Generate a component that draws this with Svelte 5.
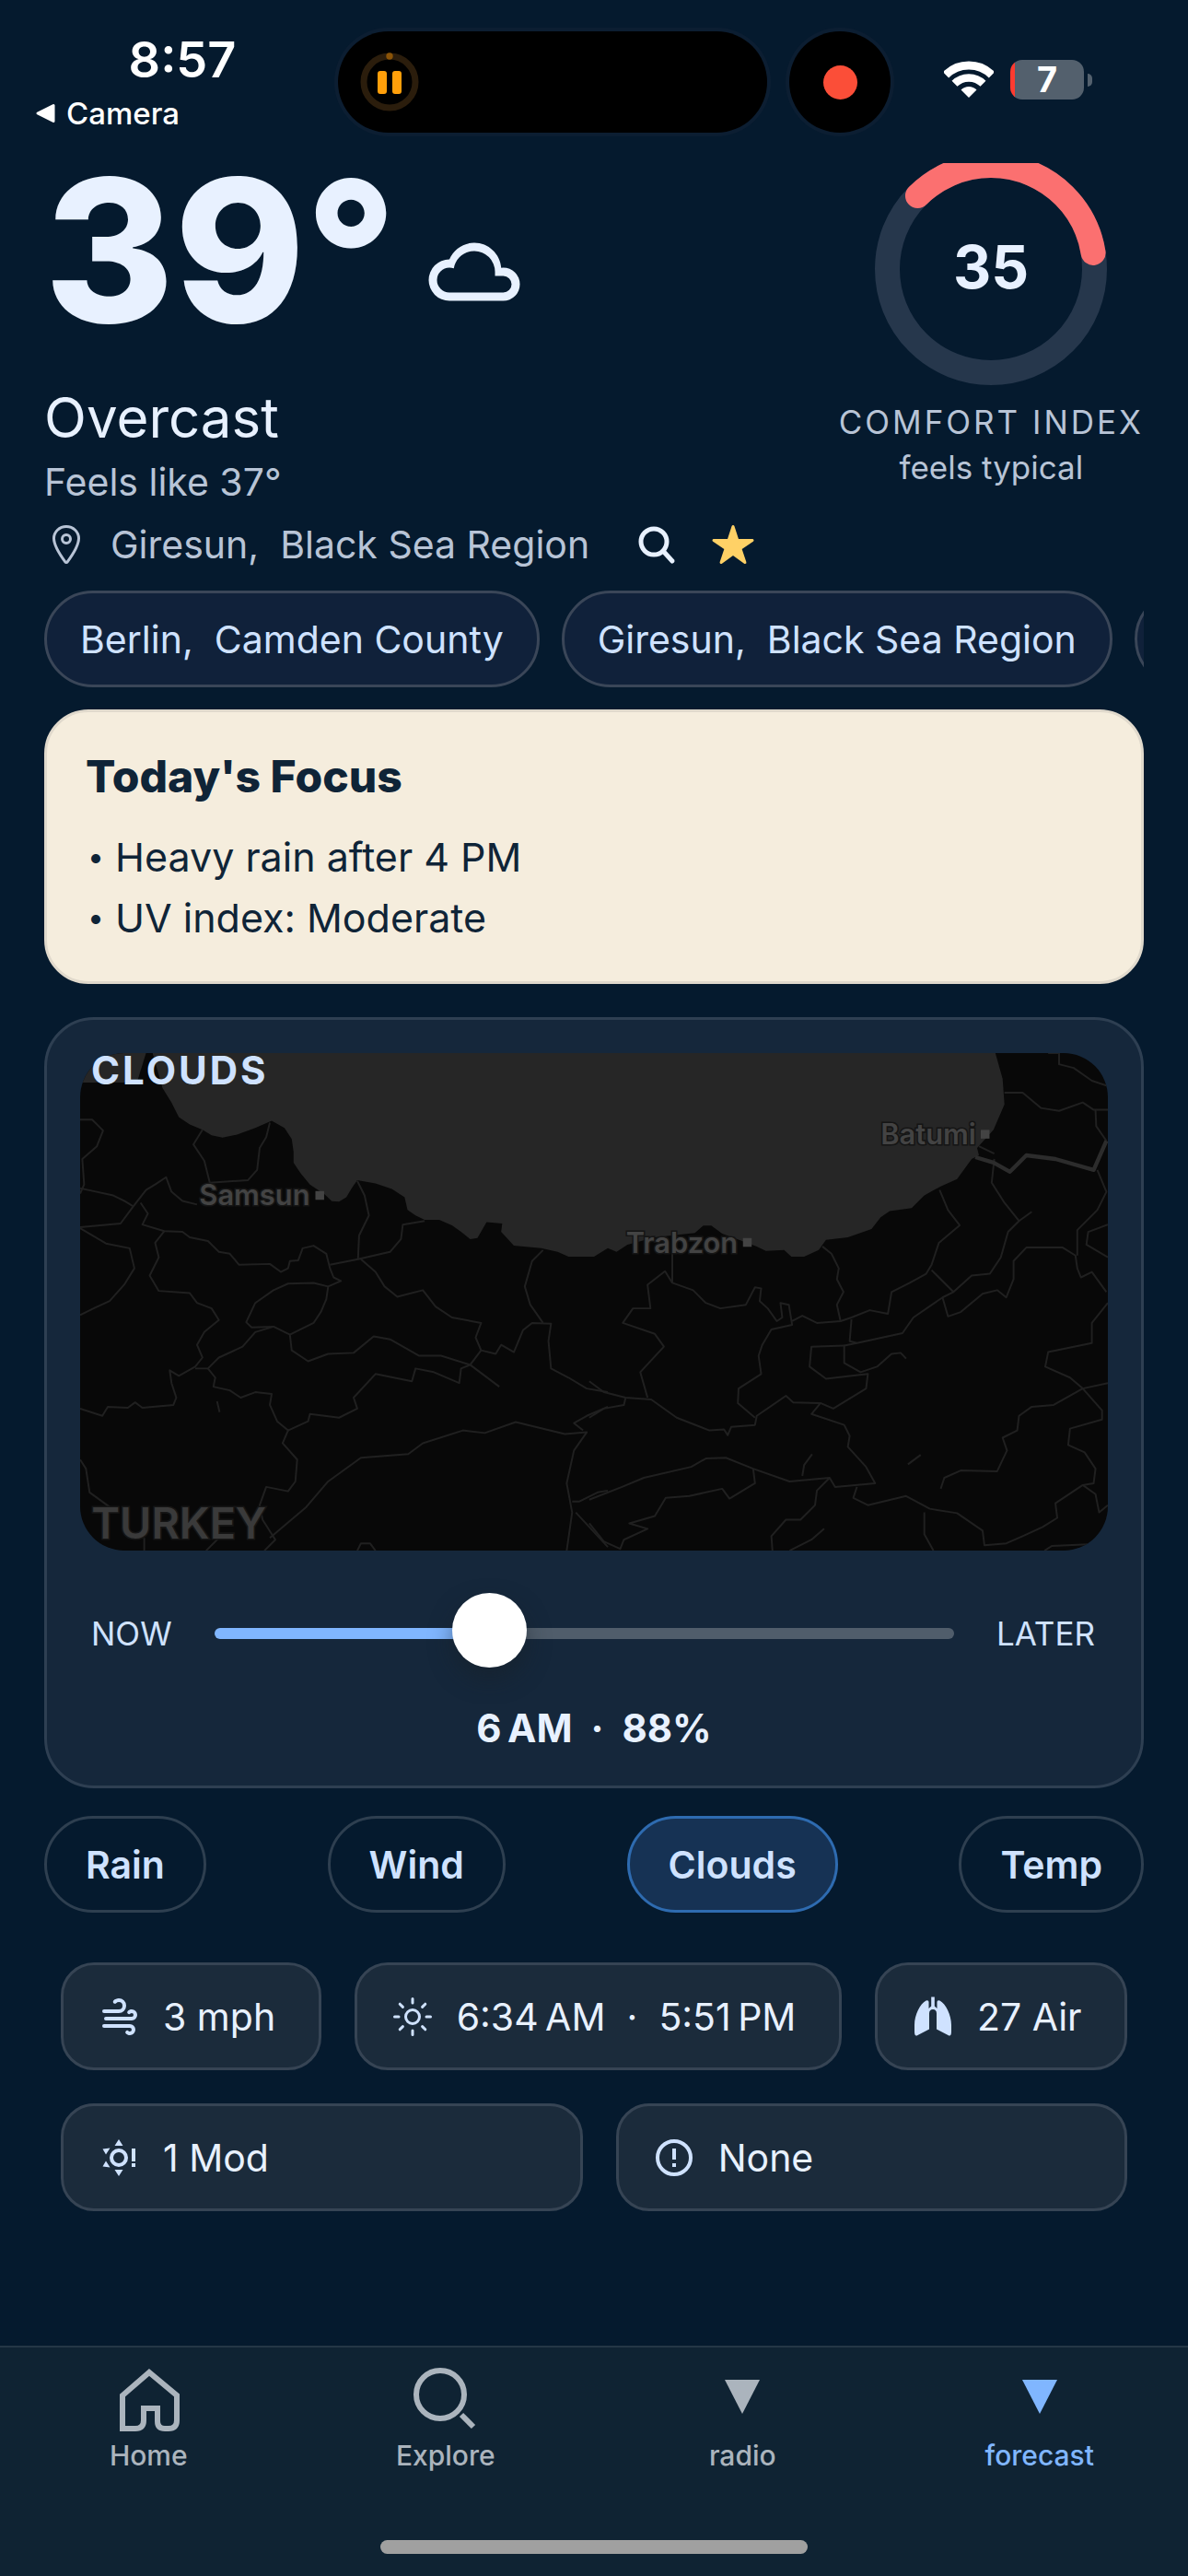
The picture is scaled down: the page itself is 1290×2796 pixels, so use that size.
<script>
  let hour = 5;
  let mode = 'Clouds';

  const comfort = 35;
  const maxHour = 14;

  const places = ['Berlin,\u00a0 Camden County', 'Giresun,\u00a0 Black Sea Region', 'London,\u00a0 England'];
  const focus = ['Heavy rain after 4 PM', 'UV index: Moderate'];
  const modes = ['Rain', 'Wind', 'Clouds', 'Temp'];

  const tabs = [
    { name: 'Home', icon: 'home' },
    { name: 'Explore', icon: 'search' },
    { name: 'radio', icon: 'triangle' },
    { name: 'forecast', icon: 'triangle', active: true }
  ];

  // province borders, west half of the map
  const westBorders = [
    'M119 292H152L182 322 165 365 125 400 130 470 119 495',
    'M119 480L150 487 210 500 240 515 265 530 230 577 119 587',
    'M265 530L300 485 325 470 355 450 370 490 400 515 440 525',
    'M119 590L190 632 255 645 268 700 240 745 200 790 160 808 119 828',
    'M285 520L305 550 290 580 350 598 400 600 420 615 470 625 500 655 530 660 555 690 640 688 670 710 690 700 695 680 718 678 730 645 760 638 795 660 805 700 815 725 835 735 800 750',
    'M350 598L325 630 335 670 310 720 335 762 420 768 440 795 480 810 500 842 460 875 440 910 455 945 435 970 390 995 365 980 370 1015 383 1055 375 1075 290 1083 270 1068 250 1083 195 1080 180 1105 119 1085',
    'M455 320L430 360 460 405 475 465 580 458 605 430 612 370 630 340 640 300',
    'M880 460L900 500 912 555 885 610 882 675 805 690',
    'M882 675L970 655 1000 620 1005 580 1065 570',
    'M890 675L930 710 955 750 990 778 1060 760 1095 805 1140 835 1220 850 1205 890 1220 925 1190 965',
    'M1220 925L1260 935 1275 910 1310 930 1335 870 1360 850 1412 852 1405 900 1412 975 1460 1000 1510 1030 1568 1040',
    'M1390 650L1360 680 1340 750 1355 800 1390 850',
    'M800 750L760 740 690 742 650 760 600 795 575 848 590 862 650 860 695 882 760 850 780 820 795 785Z',
    'M695 882L700 925 745 955 800 935 870 932 925 887 970 895 1050 940 1110 940 1190 965 1270 1025',
    'M435 975H470L500 945 565 915 600 875 650 860',
    'M470 975L490 1000 485 1025 530 1035 560 1055 600 1040 645 1045 640 1075 660 1120 690 1145 745 1120 750 1100 830 1110 880 1085 870 1055 930 990 1030 1010 1040 975 1090 985 1160 1015 1165 975 1190 965',
    'M690 1145L675 1180 715 1225 710 1285 690 1312 630 1300 612 1350 620 1390 655 1445 625 1475',
    'M640 1440L740 1355 800 1285 890 1220 1020 1210 1060 1180 1170 1145 1230 1152 1315 1122 1450 1155 1510 1150 1475 1200 1455 1290 1470 1370 1455 1475',
    'M119 1225L135 1250 145 1315 200 1355',
    'M1500 1145L1475 1125 1510 1105 1568 1080',
    'M1470 1340H1490L1540 1315 1568 1310M1480 1370L1568 1465M880 1475L890 1455 915 1455 930 1475M495 1065L502 1095M295 1475V1440M465 1475L500 1440'
  ];

  // and the east half, with its own origin
  const eastBorders = [
    'M228 640V740L285 760 320 795 360 810 430 800 455 752 472 755 468 790 490 810 515 845 530 835 525 795 548 800 557 855 500 868 475 910 465 940 472 990 410 1030 408 1070 455 1110',
    'M228 740L208 708 160 745 168 810 120 810 92 850 180 880 205 915 140 985 160 1055',
    'M0 1010L40 1040 100 1055 170 1060 240 1110 330 1145 370 1142 380 1158 390 1135 455 1130 460 1105 540 1050 560 1068 635 1070 670 1085 760 1030 765 990 650 1003 605 970 610 915 700 912',
    'M100 1055L95 1075 40 1085 0 1110',
    'M635 1070L610 1100 700 1130 715 1160 710 1190 760 1245 785 1290 675 1300 660 1275 550 1285 450 1250 375 1220 320 1222 280 1245 150 1275 90 1300 0 1335',
    'M450 1250L455 1290 385 1332 365 1305 275 1325 210 1330 180 1380 110 1400 160 1415 95 1445 85 1470 40 1450 0 1400',
    'M660 1275L625 1310 620 1350 580 1390 540 1390 500 1435 503 1475',
    'M550 1475L610 1445 645 1415M585 1270L590 1240 612 1210M875 1238L910 1212',
    'M735 1300L725 1330 765 1350 870 1325 935 1360 1010 1372 1080 1420 1085 1460 1145 1455 1190 1435 1245 1410 1285 1385 1280 1345 1355 1295',
    'M920 1370V1430L945 1475',
    'M640 640L665 660 685 700 680 730 698 765 680 800 690 845 625 850 585 830 557 845',
    'M690 845L720 835 770 815 820 825 830 765 880 740 925 715 940 690 960 630 1017 582 985 540 962 485',
    'M720 840L715 900 735 905 860 878 890 835 970 780 1000 765 940 705',
    'M735 905L700 912 700 960 745 985 790 970 830 935 855 932 870 948',
    'M970 780L985 832 1020 820 1080 770 1120 760 1145 780 1165 730 1165 680 1200 643 1300 643 1335 665 1340 700 1350 725 1380 710 1420 765',
    'M1000 765L1050 720 1100 715 1130 670 1150 600 1180 570 1140 520 1105 465 1112 400',
    'M1180 570L1215 545M1070 365L1112 385',
    'M1140 218H1190L1240 260 1290 268 1355 245 1385 265H1424',
    'M1260 109H1290V140L1330 150 1380 185 1424 200',
    'M1390 265L1392 310 1420 350M1395 430L1420 490 1395 540 1340 595 1340 665',
    'M1424 580L1370 600 1365 635 1424 670',
    'M1424 795L1380 850V905L1260 930 1252 970 1320 1000 1355 1030 1408 1090 1408 1115 1320 1140 1315 1185 1360 1205 1390 1250 1385 1290 1355 1295 1390 1320 1400 1370 1424 1350',
    'M1424 1015L1355 1030 1275 1075 1215 1080 1180 1105 1175 1145 1135 1165 1147 1200 1120 1257 1020 1255 975 1275 965 1305',
    'M1250 1475L1270 1462 1424 1455'
  ];
</script>

<div class="app">
  <header class="status">
    <div class="status-left">
      <span class="time">8:57</span>
      <a class="back" href="#camera">
        <svg width="22" height="22" viewBox="0 0 22 22"><path d="M20 2.500V19.500L3 11z" fill="#fff" stroke="#fff" stroke-width="3" stroke-linejoin="round" /></svg>
        Camera
      </a>
    </div>
    <div class="islands">
      <div class="island">
        <svg width="64" height="64" viewBox="0 0 64 64">
          <circle cx="32" cy="32" r="28" fill="none" stroke="#2b1d0c" stroke-width="7" />
          <circle cx="32" cy="4" r="3.700" fill="#8a5307" />
          <rect x="19" y="20" width="10" height="25" rx="3" fill="#ff9f0a" />
          <rect x="35" y="20" width="10" height="25" rx="3" fill="#ff9f0a" />
        </svg>
      </div>
      <div class="island round"><span class="rec"></span></div>
    </div>
    <div class="status-right">
      <svg width="54" height="41" viewBox="0 0 54 41" fill="none" stroke="#fff">
        <path d="M2 15.300A35.500 35.500 0 0 1 52 15.300" stroke-width="9" />
        <path d="M11.500 24.800A22 22 0 0 1 42.500 24.800" stroke-width="8.500" />
        <path d="M27 40L18.500 31.500A12 12 0 0 1 35.500 31.500z" fill="#fff" stroke="none" />
      </svg>
      <div class="battery"><span>7</span></div>
    </div>
  </header>

  <main>
    <section class="hero">
      <div>
        <div class="temp">
          <span>39°</span>
          <svg width="108" height="108" viewBox="0 0 24 24" fill="#e8f1ff"><path d="M6,19A5,5 0 0,1 1,14A5,5 0 0,1 6,9C7,6.650 9.300,5 12,5C15.430,5 18.240,7.660 18.500,11.030L19,11A4,4 0 0,1 23,15A4,4 0 0,1 19,19H6M19,13H17V12A5,5 0 0,0 12,7C9.500,7 7.450,8.820 7.060,11.190C6.730,11.070 6.370,11 6,11A3,3 0 0,0 3,14A3,3 0 0,0 6,17H19A2,2 0 0,0 21,15A2,2 0 0,0 19,13Z" /></svg>
        </div>
        <h1>Overcast</h1>
        <p class="feels">Feels like 37°</p>
      </div>
      <div class="comfort">
        <svg width="252" height="241" viewBox="0 0 252 241">
          <circle cx="126" cy="115" r="112.500" fill="none" stroke="#26374c" stroke-width="27" />
          <circle cx="126" cy="115" r="112.500" fill="none" stroke="#fb7070" stroke-width="27" stroke-linecap="round" pathLength="100" stroke-dasharray="{comfort} 100" transform="rotate(-135 126 115)" />
          <text x="126" y="136" text-anchor="middle">{comfort}</text>
        </svg>
        <span class="comfort-label">COMFORT INDEX</span>
        <span class="comfort-note">feels typical</span>
      </div>
    </section>

    <div class="location">
      <svg width="48" height="48" viewBox="0 0 512 512" fill="none" stroke="#b8c4d6" stroke-width="32" stroke-linejoin="round">
        <path d="M256 48c-79.500 0-144 61.390-144 137 0 87 96 224.870 131.250 272.490a15.770 15.770 0 0025.500 0C304 409.890 400 272.070 400 185c0-75.610-64.500-137-144-137z" />
        <circle cx="256" cy="192" r="48" />
      </svg>
      <span>Giresun,&nbsp; Black Sea Region</span>
      <div class="actions">
        <button class="icon-btn" aria-label="Search">
          <svg width="48" height="48" viewBox="0 0 48 48" fill="none" stroke="#e8f1ff" stroke-linecap="round"><circle cx="22" cy="21" r="14" stroke-width="5" /><path d="M32 31L42 42" stroke-width="5" /></svg>
        </button>
        <button class="icon-btn" aria-label="Favourite">
          <svg width="48" height="48" viewBox="0 0 512 512" fill="#ffd166"><path d="M394 480a16 16 0 01-9.390-3L256 383.760 127.390 477a16 16 0 01-24.550-18.080L153 310.350 23 221.200a16 16 0 019-29.200h160.380l48.400-148.950a16 16 0 0130.440 0l48.400 149H480a16 16 0 019.050 29.200L359 310.350l50.130 148.530A16 16 0 01394 480z" /></svg>
        </button>
      </div>
    </div>

    <div class="places">
      {#each places as place}
        <button class="place">{place}</button>
      {/each}
    </div>

    <section class="focus">
      <h2>Today's Focus</h2>
      <ul>
        {#each focus as item}
          <li>{item}</li>
        {/each}
      </ul>
    </section>

    <section class="card">
      <div class="map">
        <svg viewBox="119 109 2822 1366" preserveAspectRatio="xMidYMid slice">
          <path d="M119 109H300L275 190H119z" fill="#262626" />
          <path d="M318 109L345 205 370 245 390 285 420 305 455 320 480 335 510 341 550 333 600 315 645 295 680 315 700 345 705 380 705 410 725 440 750 470 790 497 810 516 830 517 850 505 865 480 880 458 930 467 975 482 1010 505 1018 540 1040 555 1065 567 1105 567 1140 582 1165 600 1190 620 1210 617 1235 573 1278 577 1275 600 1310 638 1385 645 1430 655 1460 668 1530 668 1568 645 1592 655 1622 635 1697 615 1807 603 1830 583 1852 583 1882 605 1937 625 1977 640 2002 652 2052 650 2072 668 2107 668 2147 650 2167 622 2227 615 2292 592 2317 560 2342 543 2402 535 2437 500 2482 475 2527 455 2567 400 2587 390 2582 370 2627 320 2657 250 2652 180 2632 109z" fill="#262626" />
          <g class="borders">
            {#each westBorders as d}<path {d} />{/each}
          </g>
          <g class="borders" transform="translate(1517)">
            {#each eastBorders as d}<path {d} />{/each}
            <path class="frontier" d="M1060 395L1110 410 1155 435 1200 390 1280 400 1385 430 1420 350" />
          </g>
          <g class="cities">
            <text x="750" y="527">Samsun</text>
            <rect x="765" y="488" width="24" height="24" />
            <text x="1925" y="657">Trabzon</text>
            <rect x="1939" y="617" width="24" height="24" />
            <text x="2579" y="359">Batumi</text>
            <rect x="2592" y="320" width="24" height="24" />
          </g>
          <text class="country" x="150" y="1442">TURKEY</text>
        </svg>
        <span class="map-title">CLOUDS</span>
      </div>
      <div class="slider">
        <label for="hour">NOW</label>
        <input id="hour" type="range" min="0" max={maxHour} bind:value={hour} style="--fill: {(hour / maxHour) * 100}%" />
        <span>LATER</span>
      </div>
      <p class="reading">6&#8239;AM&nbsp; ·&nbsp; 88%</p>
    </section>

    <div class="modes">
      {#each modes as m}
        <button class="mode" class:active={m === mode} on:click={() => (mode = m)}>{m}</button>
      {/each}
    </div>

    <section class="metrics">
      <div class="row">
        <div class="metric">
          <svg width="48" height="48" viewBox="0 0 24 24" fill="#cfe2ff"><path d="M4,10A1,1 0 0,1 3,9A1,1 0 0,1 4,8H12A2,2 0 0,0 14,6A2,2 0 0,0 12,4C11.450,4 10.950,4.220 10.590,4.590C10.200,5 9.560,5 9.170,4.590C8.780,4.200 8.780,3.560 9.170,3.170C9.900,2.450 10.900,2 12,2A4,4 0 0,1 16,6A4,4 0 0,1 12,10H4M19,12A1,1 0 0,0 20,11A1,1 0 0,0 19,10C18.720,10 18.470,10.110 18.290,10.290C17.900,10.680 17.270,10.680 16.880,10.290C16.500,9.900 16.500,9.270 16.880,8.880C17.420,8.340 18.170,8 19,8A3,3 0 0,1 22,11A3,3 0 0,1 19,14H5A1,1 0 0,1 4,13A1,1 0 0,1 5,12H19M18,18H4A1,1 0 0,1 3,17A1,1 0 0,1 4,16H18A3,3 0 0,1 21,19A3,3 0 0,1 18,22C17.170,22 16.420,21.660 15.880,21.120C15.500,20.730 15.500,20.100 15.880,19.710C16.270,19.320 16.900,19.320 17.290,19.710C17.470,19.890 17.720,20 18,20A1,1 0 0,0 19,19A1,1 0 0,0 18,18Z" /></svg>
          <span>3 mph</span>
        </div>
        <div class="metric">
          <svg width="48" height="48" viewBox="0 0 48 48" fill="none" stroke="#cfe2ff" stroke-width="3" stroke-linecap="round">
            <circle cx="24" cy="24" r="7.500" />
            <path d="M24 4.500V9M24 39V43.500M4.500 24H9M39 24H43.500M10.200 10.200L13.400 13.400M34.600 34.600L37.800 37.800M10.200 37.800L13.400 34.600M34.600 13.400L37.800 10.200" />
          </svg>
          <span>6:34&#8239;AM&nbsp; ·&nbsp; 5:51&#8239;PM</span>
        </div>
        <div class="metric">
          <svg width="48" height="48" viewBox="0 0 48 48" fill="#cfe2ff">
            <path d="M22.200 2.500H25.800V12.500L28.500 15V8Q28.500 5.500 31.500 6.500C38 10 44 22 44 33V40Q44 46 40.500 44L28 37.500V20.500Q28 16 24 16T20 20.500V37.500L7.500 44Q4 46 4 40V33C4 22 10 10 16.500 6.500Q19.500 5.500 19.500 8V15L22.200 12.500z" />
          </svg>
          <span>27 Air</span>
        </div>
      </div>
      <div class="row">
        <div class="metric">
          <svg width="48" height="48" viewBox="0 0 48 48" fill="#cfe2ff">
            <circle cx="24" cy="24" r="8" fill="none" stroke="#cfe2ff" stroke-width="4" />
            <path d="M24 4L28.500 11H19.500zM24 44L28.500 37H19.500zM6.500 14.500L14.500 13.500L10 20.500zM6.500 33.500L14.500 34.500L10 27.500zM38 14H42V28H38zM38 30H42V34H38z" />
          </svg>
          <span>1 Mod</span>
        </div>
        <div class="metric">
          <svg width="48" height="48" viewBox="0 0 48 48" fill="#cfe2ff">
            <circle cx="24" cy="24" r="18" fill="none" stroke="#cfe2ff" stroke-width="4" />
            <path d="M22 14H26V26H22zM22 30H26V34H22z" />
          </svg>
          <span>None</span>
        </div>
      </div>
    </section>
  </main>

  <nav>
    <div class="tabs">
      {#each tabs as tab}
        <a href="#{tab.name}" class:active={tab.active}>
          <svg width="72" height="72" viewBox="0 0 72 72" fill="none" stroke="currentColor" stroke-width="6">
            {#if tab.icon === 'home'}
              <path d="M8 70V34L37 9L67 34V61Q67 70 58 70H54Q46 70 46 62V48H31V61Q31 70 22 70z" />
            {:else if tab.icon === 'search'}
              <circle cx="30" cy="33" r="26" /><path d="M53 55L66 68" />
            {:else}
              <path d="M17 17H55L36 54z" fill="currentColor" stroke="none" />
            {/if}
          </svg>
          <span>{tab.name}</span>
        </a>
      {/each}
    </div>
    <div class="home-bar"></div>
  </nav>
</div>

<style>
  :global(body) {
    background: #051a2e;
  }

  .app {
    display: flex;
    flex-direction: column;
    min-height: 100vh;
    background: #051a2e;
    color: #e8f1ff;
    font-family: Inter, "Liberation Sans", sans-serif;
    font-size: 41px;
    line-height: 60px;
  }

  h1, h2, p, ul {
    margin: 0;
    padding: 0;
  }

  svg {
    display: block;
    flex-shrink: 0;
  }

  button {
    margin: 0;
    background: none;
    font: inherit;
    white-space: nowrap;
  }

  a {
    text-decoration: none;
  }

  .status {
    display: grid;
    grid-template-columns: 329fr 600px 323fr;
    align-items: start;
    height: 177px;
    padding-left: 38px;
    color: #fff;
  }

  .status-left {
    display: flex;
    flex-direction: column;
    gap: 8px;
    padding-top: 35px;
  }

  .time {
    padding-right: 9px;
    text-align: center;
    font-size: 54px;
    font-weight: 600;
  }

  .back {
    display: flex;
    align-items: center;
    gap: 12px;
    color: #fff;
    font-size: 33px;
    font-weight: 500;
    line-height: 40px;
  }

  .islands {
    display: flex;
    gap: 24px;
    padding-top: 34px;
  }

  .island {
    display: flex;
    align-items: center;
    flex: 1;
    height: 110px;
    padding-left: 24px;
    border-radius: 55px;
    background: #000;
    box-shadow: 0 0 0 4px #0c1e32;
  }

  .island.round {
    flex: none;
    justify-content: center;
    width: 110px;
    padding: 0;
  }

  .rec {
    width: 37px;
    height: 37px;
    border-radius: 50%;
    background: #fb4e38;
  }

  .status-right {
    display: flex;
    align-items: center;
    gap: 18px;
    padding: 65px 0 0 58px;
  }

  .battery {
    position: relative;
    width: 80px;
    height: 43px;
    border-radius: 13px;
    background: linear-gradient(90deg, #ff3b30 5px, #53606d 5px);
    text-align: center;
    font-size: 38px;
    font-weight: 700;
    line-height: 43px;
  }

  .battery::after {
    content: '';
    position: absolute;
    top: 15px;
    right: -9px;
    width: 5px;
    height: 14px;
    border-radius: 0 6px 6px 0;
    background: #53606d;
  }

  main {
    flex: 1;
    padding: 0 48px 54px;
  }

  .hero {
    display: flex;
    justify-content: space-between;
    align-items: flex-start;
  }

  .temp {
    display: flex;
    align-items: flex-end;
    gap: 30px;
    font-size: 215px;
    font-weight: 800;
    line-height: 190px;
  }

  .temp svg {
    margin-bottom: 18px;
  }

  h1 {
    margin-top: 46px;
    font-size: 60px;
    font-weight: 400;
    line-height: 80px;
  }

  .feels {
    color: #b8c4d6;
  }

  .comfort {
    display: flex;
    flex-direction: column;
    align-items: center;
    color: #b8c4d6;
    font-size: 35px;
    line-height: 49px;
  }

  .comfort text {
    fill: #e8f1ff;
    font-size: 64px;
    font-weight: 700;
  }

  .comfort-label {
    margin-top: 16px;
    letter-spacing: 3px;
  }

  .location {
    display: flex;
    align-items: center;
    gap: 24px;
    margin-top: 8px;
    color: #b8c4d6;
  }

  .actions {
    display: flex;
    gap: 36px;
    margin-left: 24px;
  }

  .icon-btn {
    padding: 0;
    border: 0;
  }

  .places {
    display: flex;
    gap: 24px;
    margin-top: 20px;
    overflow: hidden;
  }

  .place,
  .mode {
    flex-shrink: 0;
    height: 105px;
    padding: 0 36px;
    border: 3px solid #3a4658;
    border-radius: 53px;
    background: #10213a;
    color: #cfe2ff;
  }

  .focus {
    margin-top: 24px;
    padding: 40px 42px 36px;
    border: 3px solid #e0d9cc;
    border-radius: 48px;
    background: #f5eddd;
    color: #0f2437;
  }

  .focus h2 {
    font-size: 48px;
    font-weight: 800;
    line-height: 60px;
  }

  .focus ul {
    margin-top: 24px;
    list-style: none;
    font-size: 43px;
    line-height: 66px;
  }

  .focus li {
    display: flex;
  }

  .focus li::before {
    content: '•';
    width: 32px;
    padding-left: 2px;
    box-sizing: border-box;
    font-size: 32px;
  }

  .card {
    margin-top: 36px;
    padding: 36px 36px 32px;
    border: 3px solid #2e3f52;
    border-radius: 54px;
    background: #15273b;
  }

  .map {
    position: relative;
    aspect-ratio: 31 / 15;
  }

  .map svg {
    width: 100%;
    height: 100%;
    border-radius: 48px;
    background: #080808;
    overflow: hidden;
  }

  .borders {
    fill: none;
    stroke: #202020;
    stroke-width: 5;
    stroke-linejoin: round;
  }

  .frontier {
    stroke: #2c2c2c;
    stroke-width: 11;
  }

  .cities {
    fill: #434343;
    font-size: 78px;
    font-weight: 600;
    text-anchor: end;
  }

  .cities text,
  .country {
    paint-order: stroke;
    stroke: #151515;
    stroke-width: 8;
  }

  .country {
    fill: #3a3a3a;
    font-size: 118px;
    font-weight: 600;
  }

  .map-title {
    position: absolute;
    top: 0;
    left: 12px;
    color: #cfe2ff;
    font-size: 42px;
    font-weight: 700;
    letter-spacing: 3px;
    line-height: 38px;
  }

  .slider {
    display: flex;
    align-items: center;
    gap: 46px;
    height: 82px;
    margin-top: 49px;
    padding: 0 14px 0 12px;
    color: #cfe2ff;
    font-size: 35px;
  }

  input[type='range'] {
    flex: 1;
    min-width: 0;
    height: 82px;
    margin: 0;
    appearance: none;
    background: none;
  }

  input[type='range']::-webkit-slider-runnable-track {
    height: 12px;
    border-radius: 6px;
    background: linear-gradient(90deg, #80b6ff var(--fill), #505d6b var(--fill));
  }

  input[type='range']::-webkit-slider-thumb {
    appearance: none;
    width: 81px;
    height: 81px;
    margin-top: -38px;
    border-radius: 50%;
    background: #fff;
    box-shadow: 0 12px 24px rgba(24, 32, 38, 0.5);
  }

  .reading {
    margin-top: 32px;
    text-align: center;
    font-size: 42px;
    font-weight: 700;
  }

  .modes {
    display: flex;
    justify-content: space-between;
    margin-top: 30px;
  }

  .mode {
    padding: 0 42px;
    border-color: #2e3f50;
    background: none;
    font-weight: 600;
  }

  .mode.active {
    border-color: #2e6bb0;
    background: #163254;
  }

  .metrics {
    display: flex;
    flex-direction: column;
    gap: 36px;
    margin-top: 54px;
    padding: 0 18px;
  }

  .row {
    display: flex;
    gap: 36px;
  }

  .metric {
    display: flex;
    align-items: center;
    flex: 1 1 auto;
    gap: 24px;
    height: 111px;
    padding: 0 36px;
    border: 3px solid #364454;
    border-radius: 36px;
    background: #1b2b3b;
    white-space: nowrap;
  }

  nav {
    padding-bottom: 24px;
    border-top: 2px solid #253746;
    background: #0f2333;
  }

  .tabs {
    display: grid;
    grid-template-columns: repeat(4, 1fr);
    padding-top: 18px;
  }

  .tabs a {
    display: flex;
    flex-direction: column;
    align-items: center;
    gap: 9px;
    color: #abb4bd;
    font-size: 30px;
    font-weight: 500;
    line-height: 36px;
  }

  .tabs svg {
    overflow: visible;
  }

  .tabs a.active {
    color: #80b6ff;
  }

  .home-bar {
    width: 36%;
    height: 15px;
    margin: 74px auto 0;
    border-radius: 8px;
    background: #a0a0a0;
  }
</style>
